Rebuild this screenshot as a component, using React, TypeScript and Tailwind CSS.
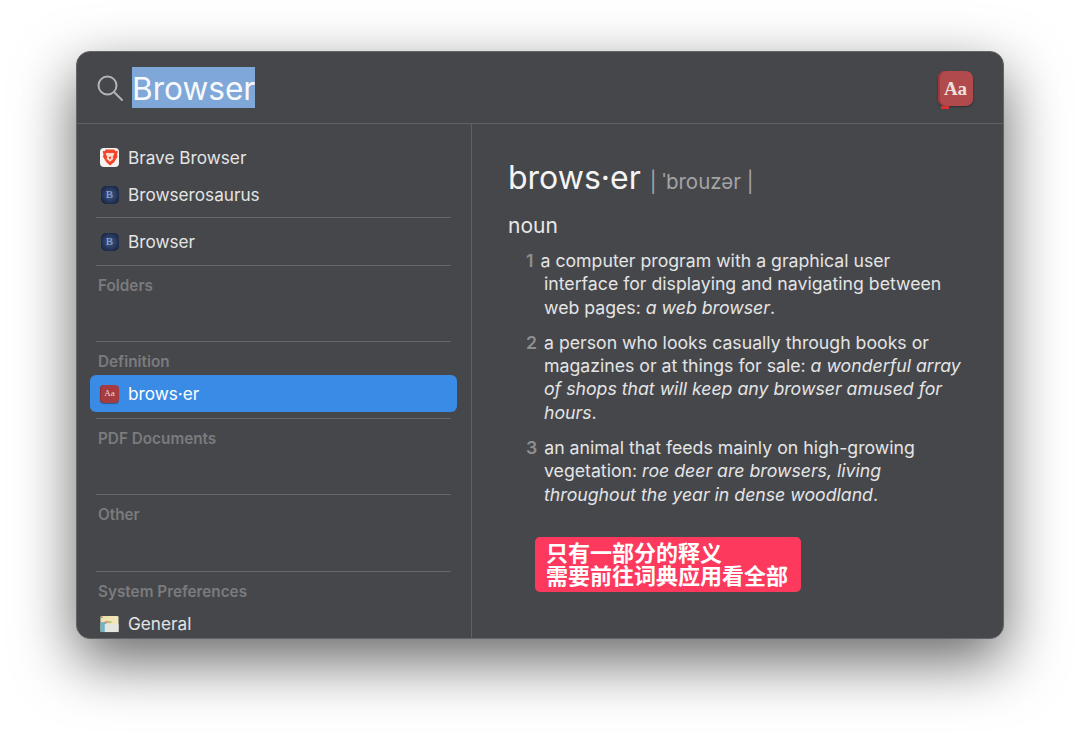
const font = "font-['Inter','Noto_Sans_CJK_SC',sans-serif]";

const DictIcon = ({ big }: { big?: boolean }) =>
  big ? (
    <div className="relative mt-[2px] flex h-[35px] w-[35px] items-center justify-center rounded-[7px] bg-[#b04a4c] shadow-[inset_2px_0_0_#9c3a3d,0_1px_2px_rgba(0,0,0,0.4)]">
      <span className="font-['Liberation_Serif',serif] text-[19px] font-bold leading-none text-[#eee0dc]">Aa</span>
      <div className="absolute bottom-[-3px] left-[3px] h-[3px] w-[8px] bg-[#d8302c]" />
    </div>
  ) : (
    <div className="flex h-[18px] w-[19px] items-center justify-center rounded-[4px] bg-[#a63c40] shadow-[inset_1px_0_0_#8e3034,0_1px_1px_rgba(0,0,0,0.35)]">
      <span className="font-['Liberation_Serif',serif] text-[9px] leading-none text-[#f0dcd8]">Aa</span>
    </div>
  );

const BraveIcon = () => (
  <div className="flex h-[19px] w-[19px] items-center justify-center rounded-[4px] bg-[#f6f3f2]">
    <svg width="16" height="17" viewBox="0 0 15 16">
      <path
        d="M3.400 0.500h8.200l1.300 1.500 1.400-.3.500 1.200-.7 2.300.5 2-3.200 5.200L7.500 15.500 4.100 12.400 0.900 7.200l.5-2L0.700 2.900l.5-1.200 1.400.3z"
        fill="#f4442a"
      />
      <path
        d="M3.300 4.300 5.500 3.500 7.500 4l2-.5 2.200.8-1.700 3.200.7 1.700L7.500 12 4.300 9.200 5 7.500z"
        fill="#fbe0d6"
      />
      <path d="M6.200 6.500 7.500 7.800 8.800 6.500 8.300 9 7.500 9.800 6.700 9z" fill="#f4442a" />
    </svg>
  </div>
);

const RosaurusIcon = () => (
  <div className="flex h-[18px] w-[18px] items-center justify-center rounded-[5px] bg-[radial-gradient(circle,#3f5c8f_0%,#1c2a47_75%,#151d30_100%)]">
    <span className="font-['Liberation_Serif',serif] text-[11px] leading-none text-[#9fb0d6]">B</span>
  </div>
);

const GeneralIcon = () => (
  <svg width="20" height="18" viewBox="0 0 20 18">
    <defs>
      <linearGradient id="gen" x1="0" y1="0" x2="1" y2="1">
        <stop offset="0" stopColor="#efe0a8" />
        <stop offset="1" stopColor="#f2e9c8" />
      </linearGradient>
    </defs>
    <rect x="0.500" y="0.500" width="19" height="17" rx="1.500" fill="url(#gen)" />
    <rect x="0.500" y="7" width="6" height="10.500" fill="#6fb3c4" />
    <rect x="5" y="9" width="14.500" height="8.500" fill="#e4e4e0" />
    <rect x="5" y="6" width="4" height="2" fill="#e88e78" />
    <rect x="9" y="6" width="3" height="2" fill="#9ccb7a" />
    <circle cx="2" cy="2" r="0.800" fill="#6c6a58" />
  </svg>
);

const Divider = ({ className }: { className: string }) => (
  <div className={`ml-[19px] mr-[20px] h-px bg-[#66676a] ${className}`} />
);

const Row = ({ icon, label, active }: { icon: React.ReactNode; label: string; active?: boolean }) => (
  <div
    className={`ml-[13px] mr-[14px] flex h-[37px] items-center gap-[9px] rounded-[6px] pl-[10px] text-[17.200px] ${
      active ? "bg-[#3a8be6] text-white" : "text-[#e4e4e5]"
    }`}
  >
    <div className="flex w-[19px] justify-center">{icon}</div>
    <span>{label}</span>
  </div>
);

const Heading = ({ children }: { children: string }) => (
  <div className="ml-[21px] pb-[4px] pt-[11px] text-[15.300px] font-semibold leading-[18px] text-[#7a7b7e]">{children}</div>
);

const Sidebar = () => (
  <div className="w-[395px] shrink-0 border-r border-[#5f6063] pt-[15px]">
    <Row icon={<BraveIcon />} label="Brave Browser" />
    <Row icon={<RosaurusIcon />} label="Browserosaurus" />
    <Divider className="mt-[4px]" />
    <div className="mt-[5px]">
      <Row icon={<RosaurusIcon />} label="Browser" />
    </div>
    <Divider className="mt-[5px]" />
    <div className="h-[75px]">
      <Heading>Folders</Heading>
    </div>
    <Divider className="" />
    <Heading>Definition</Heading>
    <Row icon={<DictIcon />} label="brows·er" active />
    <Divider className="mt-[6px]" />
    <div className="h-[75px]">
      <Heading>PDF Documents</Heading>
    </div>
    <Divider className="" />
    <div className="h-[76px]">
      <Heading>Other</Heading>
    </div>
    <Divider className="" />
    <Heading>System Preferences</Heading>
    <Row icon={<GeneralIcon />} label="General" />
  </div>
);

const Sense = ({ n, lines, className }: { n: number; lines: React.ReactNode[]; className: string }) => (
  <div className={`text-[17.700px] leading-[23.300px] text-[#e4e4e5] ${className}`}>
    <div className="ml-[18px] flex whitespace-nowrap">
      <span className="font-semibold text-[#8d8e90]">{n}</span>
      <span className="ml-[7px]">{lines[0]}</span>
    </div>
    {lines.slice(1).map((line, i) => (
      <div key={i} className="ml-[36px] whitespace-nowrap">
        {line}
      </div>
    ))}
  </div>
);

const Definition = () => (
  <div className="flex-1 pl-[36px] pt-[31px]">
    <div className="flex items-baseline whitespace-nowrap">
      <span className="text-[32px] leading-[46px] text-[#f4f4f4]">brows·er</span>
      <span className="ml-[9px] text-[20.500px] text-[#a3a4a6]">| ˈbrouzər |</span>
    </div>
    <div className="mt-[11px] text-[21px] leading-[28px] text-[#e8e8e9]">noun</div>
    <Sense
      n={1}
      className="mt-[9px]"
      lines={[
        "a computer program with a graphical user",
        "interface for displaying and navigating between",
        <>
          web pages: <i>a web browser</i>.
        </>,
      ]}
    />
    <Sense
      n={2}
      className="mt-[12px]"
      lines={[
        "a person who looks casually through books or",
        <>
          magazines or at things for sale: <i>a wonderful array</i>
        </>,
        <i>of shops that will keep any browser amused for</i>,
        <>
          <i>hours</i>.
        </>,
      ]}
    />
    <Sense
      n={3}
      className="mt-[12px]"
      lines={[
        "an animal that feeds mainly on high-growing",
        <>
          vegetation: <i>roe deer are browsers, living</i>
        </>,
        <>
          <i>throughout the year in dense woodland</i>.
        </>,
      ]}
    />
    <div className="ml-[27px] mt-[31px] w-[266px] rounded-[5px] bg-[#fd3a5e] px-[11px] pb-[4px] pt-[5px] text-[22px] font-bold leading-[23px] text-white">
      <div>只有一部分的释义</div>
      <div>需要前往词典应用看全部</div>
    </div>
  </div>
);

export default function App() {
  return (
    <div className={`h-[739px] w-[1080px] overflow-hidden bg-white pl-[76px] pt-[51px] ${font}`}>
      <div className="flex h-[588px] w-[928px] flex-col overflow-hidden rounded-[14px] border border-[#636467] bg-[#46474b] shadow-[0_22px_60px_0_rgba(0,0,0,0.6)]">
        <div className="flex h-[72px] shrink-0 items-center border-b border-[#5f6063] pl-[19px] pr-[30px]">
          <svg width="28" height="28" viewBox="0 0 28 28" fill="none" stroke="#b3b4b6" strokeWidth="2">
            <circle cx="11.500" cy="11.500" r="9" />
            <path d="M18 18l8 8" strokeLinecap="round" />
          </svg>
          <div className="ml-[8px] flex h-[41px] items-center bg-[#7fa8d8] pt-[3px] text-[31.600px] leading-none text-[#f7f9fc]">Browser</div>
          <div className="ml-auto">
            <DictIcon big />
          </div>
        </div>
        <div className="flex min-h-0 flex-1">
          <Sidebar />
          <Definition />
        </div>
      </div>
    </div>
  );
}
